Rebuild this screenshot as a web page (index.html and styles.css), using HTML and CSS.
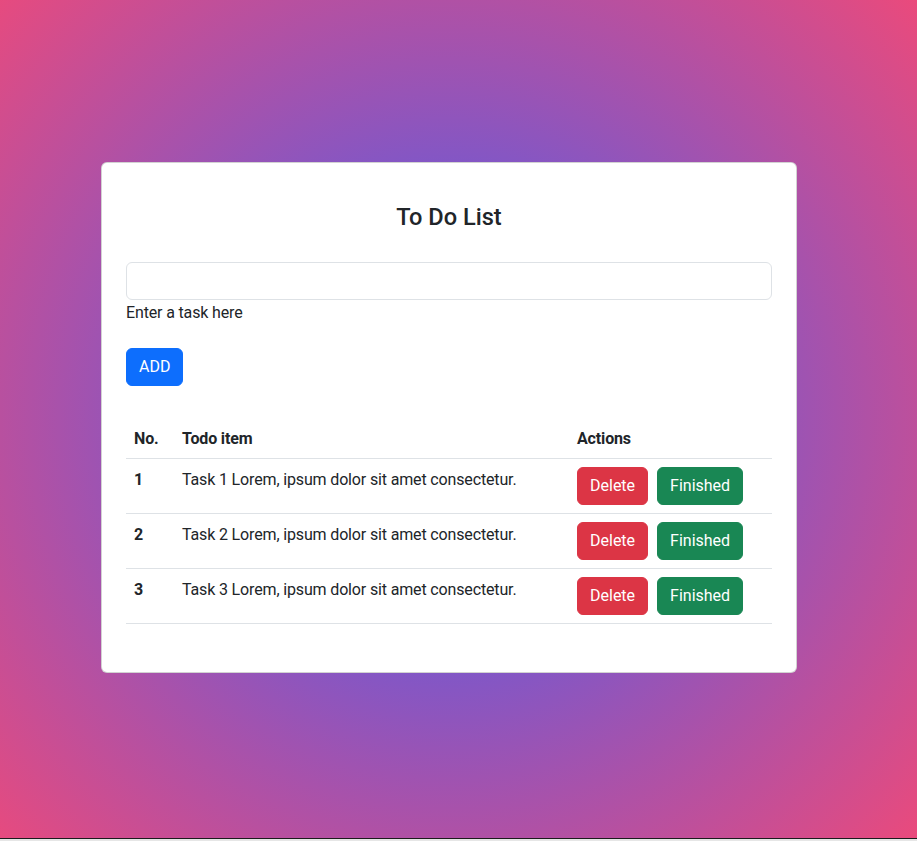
FILE: index.html
```html
<!DOCTYPE html>
<html lang="en">
<head>
<meta charset="utf-8">
<title>To Do List</title>
<link rel="stylesheet" href="styles.css">
</head>
<body>
<div class="screen">
  <div class="shell">
    <div class="card">
      <h3 class="title">To Do List</h3>
      <input class="task-input" type="text" aria-label="Task">
      <div class="hint">Enter a task here</div>
      <button class="btn btn-primary">ADD</button>
      <table class="todo-table">
        <thead>
          <tr>
            <th class="col-no">No.</th>
            <th>Todo item</th>
            <th class="col-actions">Actions</th>
          </tr>
        </thead>
        <tbody>
          <tr>
            <th>1</th>
            <td>Task 1 Lorem, ipsum dolor sit amet consectetur.</td>
            <td><div class="actions"><button class="btn btn-danger">Delete</button><button class="btn btn-success">Finished</button></div></td>
          </tr>
          <tr>
            <th>2</th>
            <td>Task 2 Lorem, ipsum dolor sit amet consectetur.</td>
            <td><div class="actions"><button class="btn btn-danger">Delete</button><button class="btn btn-success">Finished</button></div></td>
          </tr>
          <tr>
            <th>3</th>
            <td>Task 3 Lorem, ipsum dolor sit amet consectetur.</td>
            <td><div class="actions"><button class="btn btn-danger">Delete</button><button class="btn btn-success">Finished</button></div></td>
          </tr>
        </tbody>
      </table>
    </div>
  </div>
</div>
</body>
</html>
```

FILE: styles.css
```css
html {
  background: #e6e6e6;
}
body {
  margin: 0;
  font-family: Roboto, "Noto Sans", "Liberation Sans", sans-serif;
  font-size: 16px;
  line-height: 1.5;
  letter-spacing: -0.15px;
  color: #212529;
}
.screen {
  height: 839px;
  border-bottom: 1px solid #1c1c1c;
  background: radial-gradient(circle farthest-corner at 449px 420px, rgb(60, 95, 247) 0%, rgb(234, 74, 124) 100%);
  padding-top: 162px;
  box-sizing: border-box;
}
.shell {
  width: 898px;
}
.card {
  width: 696px;
  margin: 0 auto;
  box-sizing: border-box;
  background: #fff;
  border: 1px solid rgba(0, 0, 0, 0.175);
  border-radius: 6px;
  padding: 24px 24px 24px;
}
.title {
  margin: 15px 0 29px;
  font-size: 23.6px;
  font-weight: 500;
  line-height: 31px;
  letter-spacing: 0;
  text-align: center;
}
.task-input {
  display: block;
  width: 100%;
  box-sizing: border-box;
  height: 38px;
  margin: 0;
  padding: 6px 12px;
  font: inherit;
  border: 1px solid #dee2e6;
  border-radius: 6px;
  background: #fff;
}
.hint {
  padding-top: 1px;
  margin-bottom: 23px;
}
.btn {
  display: inline-block;
  box-sizing: border-box;
  height: 38px;
  padding: 6px 12px;
  font: inherit;
  line-height: 24px;
  color: #fff;
  border: 1px solid transparent;
  border-radius: 6px;
  cursor: pointer;
}
.btn-primary {
  background: #0d6efd;
  border-color: #0d6efd;
}
.btn-danger {
  background: #dc3545;
  border-color: #dc3545;
}
.btn-success {
  background: #198754;
  border-color: #198754;
}
.todo-table {
  width: 100%;
  margin-top: 32px;
  margin-bottom: 24px;
  border-collapse: collapse;
}
.todo-table th,
.todo-table td {
  padding: 9px 8px 7px;
  text-align: left;
  vertical-align: top;
  border-bottom: 1px solid #dee2e6;
}
.todo-table td:last-child {
  padding-top: 8px;
  padding-bottom: 8px;
}
.todo-table th {
  font-weight: 700;
}
.col-no {
  width: 32px;
}
.col-actions {
  width: 187px;
}
.actions {
  display: flex;
  gap: 9px;
}
```
